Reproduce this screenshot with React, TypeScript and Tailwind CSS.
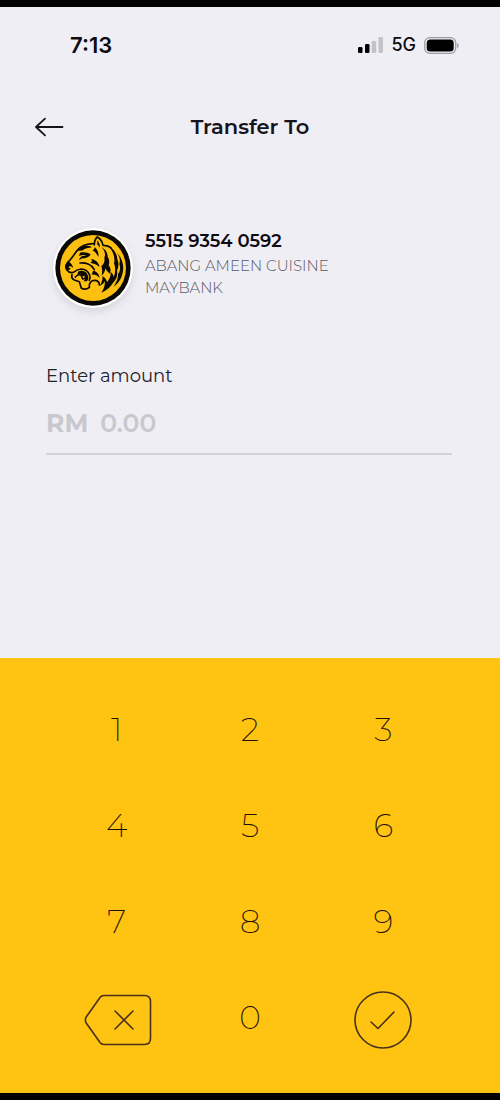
import React, { useState } from "react";

const digits = ["1", "2", "3", "4", "5", "6", "7", "8", "9"];

const StatusBar = () => (
  <div className="flex items-center justify-between pt-6 pr-10 pl-[70px] h-[52px] font-['Inter',sans-serif] text-[#0c0b12]">
    <span className="text-[22px] leading-7 font-semibold">7:13</span>
    <div className="flex items-center gap-2">
      <svg width="26" height="16" viewBox="0 0 26 16" aria-hidden="true">
        <rect x="1" y="10" width="4.5" height="6" rx="1.2" fill="#000" />
        <rect x="8" y="7" width="4.500" height="9" rx="1.2" fill="#000" />
        <rect x="14.700" y="4" width="4.5" height="12" rx="1.2" fill="#c3c2c8" />
        <rect x="21.500" y="0" width="4.5" height="16" rx="1.2" fill="#c3c2c8" />
      </svg>
      <span className="text-lg leading-7 font-medium">5G</span>
      <svg width="36" height="17" viewBox="0 0 36 17" aria-hidden="true">
        <rect
          x="0.7"
          y="0.7"
          width="31"
          height="15.6"
          rx="5"
          fill="none"
          stroke="#9c9ba1"
          strokeWidth="1.3"
        />
        <rect x="2.7" y="2.5" width="27" height="12" rx="3.5" fill="#000" />
        <path d="M33.2 6v5c2-.8 2-4.200 0-5Z" fill="#9c9ba1" />
      </svg>
    </div>
  </div>
);

const BankLogo = () => (
  <svg
    viewBox="23 25 240 240"
    className="size-20 shrink-0 rounded-full shadow-[0_4px_8px_rgba(0,0,0,0.1)]"
    role="img"
    aria-label="Maybank"
  >
    <circle cx="143" cy="145" r="120" fill="#fff" />
    <circle cx="143" cy="145" r="113" fill="#0b0906" />
    <circle cx="143" cy="145" r="99" fill="#fdc010" />
    <g
      fill="none"
      stroke="#0b0906"
      strokeWidth="5"
      strokeLinecap="round"
      strokeLinejoin="round"
    >
      {/* forehead down to the nose */}
      <path d="M147 72C126 71 104 79 94 94C86 106 78 118 67 129" />
      {/* ear */}
      <path d="M147 76C147 66 150 57 156 52C165 57 171 66 173 77C183 77 192 80 198 86" />
      {/* upper lip and lower jaw */}
      <path d="M64 150C70 158 78 161 86 157C96 148 112 145 123 153C132 160 136 171 132 182" />
      <path d="M80 165C78 172 81 178 87 181L102 186L108 206C116 210 126 208 132 203" />
      <path d="M132 203C130 190 138 181 150 182C158 183 162 189 162 196" />
      {/* cheek */}
      <path d="M104 130C120 128 138 134 147 150" />
      <path d="M90 172C95 166 101 164 107 166L112 178L122 174" />
    </g>
    <g fill="#0b0906">
      {/* nose */}
      <path d="M68 125C60 131 57 140 60 148C65 153 72 152 76 147L69 143C72 137 81 140 84 146C82 136 77 130 68 125Z" />
      {/* brow and eye */}
      <path d="M105 84C116 77 131 77 140 83C129 84 118 87 110 93C102 92 96 94 91 99C93 92 98 87 105 84Z" />
      <path d="M104 99C114 96 128 98 136 104C132 112 122 117 110 116L101 122C103 115 106 111 111 109L123 108C117 105 109 106 101 109Z" />
      {/* temple stripes */}
      <path d="M148 82C157 90 161 100 159 112C155 103 149 96 141 92C146 90 148 87 148 82Z" />
      <path d="M156 62C161 68 164 75 164 84L156 74Z" />
      <path d="M138 118C151 120 160 129 163 142C155 135 146 131 135 130C140 127 141 123 138 118Z" />
      <path d="M143 153C154 155 162 163 163 175C156 167 148 164 139 165Z" />
      {/* mouth */}
      <path d="M98 156C108 151 119 154 125 162C130 170 130 179 125 185L115 185C119 180 120 174 117 168L108 171L105 162L96 167Z" />
      {/* mane */}
      <path d="M168 82C180 88 187 98 187 111C192 119 193 128 190 137C196 144 197 153 194 162C188 158 183 153 180 146C179 155 176 162 169 168C171 157 171 147 168 139C176 133 179 124 177 113C182 105 178 92 168 82Z" />
      <path d="M190 80C206 88 215 102 216 119C221 130 220 143 215 153C218 166 213 180 203 190C196 202 184 212 168 219C176 207 180 196 178 185C175 191 170 196 163 199C170 187 173 177 171 169C179 174 184 180 185 188C193 178 197 168 196 157C202 162 205 167 205 173C211 157 211 143 206 131C210 117 205 97 190 80Z" />
      <path d="M213 97C228 112 236 132 233 153C231 172 221 190 205 201C214 187 219 175 218 164C225 154 226 143 222 133C226 121 222 108 213 97Z" />
    </g>
  </svg>
);

const keyClass =
  "flex h-24 items-center justify-center text-[33px] leading-10 font-extralight text-[#1f0d08]";

const App = () => {
  const [amount, setAmount] = useState("");

  return (
    <div className="flex min-h-screen flex-col border-y-[7px] border-black bg-[#efeef4] font-['Montserrat','Inter',sans-serif]">
      <StatusBar />

      <header className="mt-[46px] grid grid-cols-[40px_1fr_40px] items-center px-[29px] h-11">
        <button
          type="button"
          aria-label="Back"
          className="flex h-11 items-center justify-center"
        >
          <svg
            width="30"
            height="20"
            viewBox="0 0 30 20"
            fill="none"
            stroke="#15141b"
            strokeWidth="1.8"
            strokeLinecap="round"
            strokeLinejoin="round"
            aria-hidden="true"
          >
            <path d="M28.500 10H2M11 1.700L2 10l9 8.300" />
          </svg>
        </button>
        <h1 className="text-center text-[21px] leading-7 font-semibold text-[#15141b]">
          Transfer To
        </h1>
      </header>

      <main className="flex-1 pr-12 pl-[46px] pt-[79px]">
        <section className="flex gap-3 pl-[7px]">
          <BankLogo />
          <div className="pt-px text-[#5a5961]">
            <h2 className="text-lg leading-6 font-semibold text-[#0c0b12]">
              5515 9354 0592
            </h2>
            <p className="mt-0.5 text-[15px] leading-[22px] font-light">
              ABANG AMEEN CUISINE
            </p>
            <p className="text-[15px] leading-[22px] font-light">MAYBANK</p>
          </div>
        </section>

        <section className="mt-14">
          <label
            htmlFor="amount"
            className="block text-lg leading-6 text-[#24232b]"
          >
            Enter amount
          </label>
          <div className="mt-[15px] flex items-center gap-3 border-b-2 border-[#d2d1d7] pb-2.5 text-[25px] leading-10 text-[#c9c8ce]">
            <span className="font-bold">RM</span>
            <input
              id="amount"
              inputMode="decimal"
              placeholder="0.00"
              value={amount}
              onChange={(e) => setAmount(e.target.value)}
              className="h-10 w-full min-w-0 bg-transparent font-semibold outline-none placeholder:text-[#c9c8ce]"
            />
          </div>
        </section>
      </main>

      <div className="grid grid-cols-3 bg-[#ffc412] px-[50px] pt-[23px] pb-7">
        {digits.map((digit) => (
          <button
            key={digit}
            type="button"
            className={keyClass}
            onClick={() => setAmount((prev) => prev + digit)}
          >
            {digit}
          </button>
        ))}
        <button
          type="button"
          aria-label="Delete"
          className="flex h-24 items-center justify-center pt-1.5 pl-0.5"
          onClick={() => setAmount((prev) => prev.slice(0, -1))}
        >
          <svg
            width="68"
            height="52"
            viewBox="0 0 68 52"
            fill="none"
            stroke="#49301c"
            strokeWidth="1.6"
            strokeLinecap="round"
            aria-hidden="true"
          >
            <path d="M20 1.500H60.500Q66.500 1.500 66.500 7.500V44.500Q66.500 50.500 60.500 50.500H20Q17.500 50.500 16 48.500L2.200 29Q.500 26 2.200 23L16 3.500Q17.500 1.500 20 1.500Z" />
            <path d="M31 17L49 35M49 17L31 35" />
          </svg>
        </button>
        <button
          type="button"
          className={keyClass}
          onClick={() => setAmount((prev) => prev + "0")}
        >
          0
        </button>
        <button
          type="button"
          aria-label="Confirm"
          className="flex h-24 items-center justify-center pt-1.5"
        >
          <svg
            width="58"
            height="58"
            viewBox="0 0 58 58"
            fill="none"
            stroke="#49301c"
            strokeWidth="1.6"
            strokeLinecap="round"
            strokeLinejoin="round"
            aria-hidden="true"
          >
            <circle cx="29" cy="29" r="28" />
            <path d="M17 31L24 37.500L40 21" />
          </svg>
        </button>
      </div>
    </div>
  );
};

export default App;
